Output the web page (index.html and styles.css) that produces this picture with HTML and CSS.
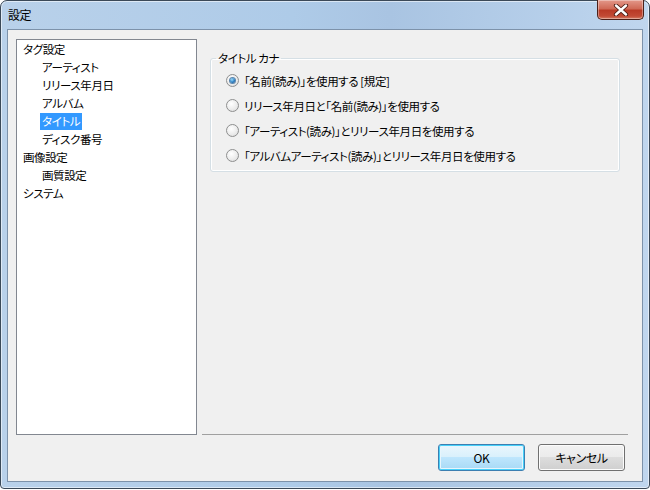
FILE: index.html
```html
<!DOCTYPE html>
<html lang="ja">
<head>
    <meta charset="UTF-8">
    <title>設定</title>
    <link rel="stylesheet" href="styles.css">
</head>
<body>
    <div class="window">
        <div class="titlebar">
            <span class="title">設定</span>
            <button class="close" type="button" aria-label="閉じる">
                <svg width="16" height="12" viewBox="0 0 16 12">
                    <path d="M3 1.5 L13 10.5 M13 1.5 L3 10.5" stroke="#4a1a12" stroke-width="4.2" stroke-linecap="round"/>
                    <path d="M3 1.5 L13 10.5 M13 1.5 L3 10.5" stroke="#fff" stroke-width="2.4" stroke-linecap="round"/>
                </svg>
            </button>
        </div>

        <div class="client">
            <div class="main">
                <ul class="tree">
                    <li class="node"><span>タグ設定</span></li>
                    <li class="node child"><span>アーティスト</span></li>
                    <li class="node child"><span>リリース年月日</span></li>
                    <li class="node child"><span>アルバム</span></li>
                    <li class="node child selected"><span>タイトル</span></li>
                    <li class="node child"><span>ディスク番号</span></li>
                    <li class="node"><span>画像設定</span></li>
                    <li class="node child"><span>画質設定</span></li>
                    <li class="node"><span>システム</span></li>
                </ul>

                <div class="panel">
                    <fieldset class="group">
                        <legend>タイトル カナ</legend>
                        <label class="radio checked"><span class="dot"></span>「名前(読み)」を使用する [規定]</label>
                        <label class="radio"><span class="dot"></span>リリース年月日と「名前(読み)」を使用する</label>
                        <label class="radio"><span class="dot"></span>「アーティスト(読み)」とリリース年月日を使用する</label>
                        <label class="radio"><span class="dot"></span>「アルバムアーティスト(読み)」とリリース年月日を使用する</label>
                    </fieldset>
                </div>
            </div>

            <div class="footer">
                <button class="btn default" type="button">OK</button>
                <button class="btn" type="button">キャンセル</button>
            </div>
        </div>
    </div>
</body>
</html>
```

FILE: styles.css
```css
body {
    margin: 0;
    background: #ffffff;
    font-family: "Noto Sans CJK JP", "Noto Sans", sans-serif;
    font-size: 11.5px;
    letter-spacing: -0.4px;
    font-feature-settings: "palt";
    color: #000;
}
.window {
    width: 648px;
    height: 487px;
    border: 1px solid #3b4958;
    border-radius: 7px 7px 4px 4px;
    background: linear-gradient(90deg, #b9d1ea 0%, #aecbe8 45%, #a9c4e2 60%, #b6cfea 85%, #c0d6ee 100%);
    box-shadow: inset 0 0 0 1px rgba(255, 255, 255, 0.55);
    display: flex;
    flex-direction: column;
}
.titlebar {
    height: 28px;
    display: flex;
    justify-content: space-between;
    align-items: flex-start;
    padding: 0 5px 0 7px;
}
.title {
    margin-top: 5px;
    line-height: 18px;
    font-size: 12px;
}
.close {
    margin-top: -1px;
    width: 47px;
    height: 20px;
    padding: 0;
    border: 1px solid #4b2019;
    border-top: none;
    border-radius: 0 0 5px 5px;
    background: linear-gradient(#e3988a 0%, #d06a57 45%, #b93a26 55%, #c24a35 85%, #d67f66 100%);
    box-shadow: inset 0 0 0 1px rgba(255, 255, 255, 0.35);
    display: flex;
    align-items: center;
    justify-content: center;
}
.client {
    flex: 1;
    margin: 0 6px 6px 6px;
    border: 1px solid #7d92aa;
    background: #f0f0f0;
    padding: 9px 17px 0 8px;
    display: flex;
    flex-direction: column;
}
.main {
    height: 396px;
    display: flex;
    gap: 5px;
}
.tree {
    width: 179px;
    margin: 0;
    padding: 1px 0 0 0;
    list-style: none;
    background: #fff;
    border: 1px solid #828790;
}
.node {
    height: 18px;
    line-height: 17px;
    padding-left: 4px;
}
.node span {
    display: inline-block;
    padding: 0 2px;
}
.node.child {
    padding-left: 23px;
}
.node.selected span {
    background: #3399ff;
    color: #fff;
}
.panel {
    flex: 1;
    margin-right: -3px;
    border-bottom: 1px solid #a0a0a0;
}
.group {
    margin: 10px 8px 0 8px;
    padding: 1px 0 3px 15px;
    border: 1px solid #d5dfe5;
    border-radius: 3px;
    box-shadow: inset 0 0 0 1px #fff;
}
.group legend {
    margin-left: -10px;
    padding: 0 2px;
    line-height: 18px;
}
.radio {
    height: 25px;
    display: flex;
    align-items: center;
    gap: 5px;
    white-space: nowrap;
}
.dot {
    width: 11px;
    height: 11px;
    border: 1px solid #8e8f8f;
    border-radius: 50%;
    background: radial-gradient(circle at 40% 35%, #ffffff 0%, #ececec 55%, #d6d6d6 100%);
    display: flex;
    align-items: center;
    justify-content: center;
}
.radio.checked .dot::after {
    content: "";
    width: 5px;
    height: 5px;
    border-radius: 50%;
    background: radial-gradient(circle at 40% 35%, #9ddcf9 0%, #2b7fc4 55%, #0f3d76 100%);
    box-shadow: 0 0 0 1px #5d87ad;
}
.footer {
    display: flex;
    justify-content: flex-end;
    gap: 13px;
    margin-top: 9px;
}
.btn {
    width: 87px;
    height: 27px;
    padding: 0;
    font-family: inherit;
    font-size: 12px;
    letter-spacing: -0.4px;
    font-feature-settings: "palt";
    color: #000;
    border: 1px solid #707070;
    border-radius: 3px;
    background: linear-gradient(#f2f2f2 0%, #ebebeb 49%, #dddddd 50%, #cfcfcf 100%);
    box-shadow: inset 0 0 0 1px #fcfcfc;
}
.btn.default {
    border-color: #3c7fb1;
    background: linear-gradient(#eaf6fd 0%, #d9f0fc 49%, #bee6fd 50%, #a7d9f5 100%);
    box-shadow: inset 0 0 0 1px #48d0f9, inset 0 0 0 2px #e7f5fc;
}
```
